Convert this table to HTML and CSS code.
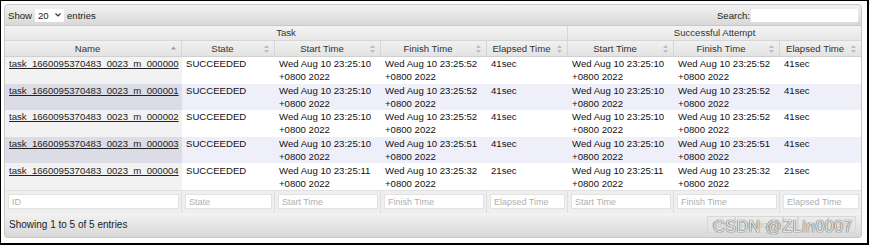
FILE: index.html
```html
<!DOCTYPE html>
<html>
<head>
<meta charset="utf-8">
<link rel="stylesheet" href="styles.css">
</head>
<body>
<div class="frame">
  <div class="wrapper">
    <div class="toolbar top">
      <div class="length">Show <span class="select">20<svg class="chev" width="6" height="4" viewBox="0 0 6 4"><path d="M0.5 0.5 L3 3 L5.5 0.5" fill="none" stroke="#333" stroke-width="1.2"/></svg></span> entries</div>
      <div class="search">Search:<span class="search-input"></span></div>
    </div>
    <table class="grid">
      <colgroup>
        <col class="c-name"><col class="c-state"><col class="c-time"><col class="c-time"><col class="c-el"><col class="c-time"><col class="c-time"><col class="c-el">
      </colgroup>
      <thead>
        <tr class="group">
          <th colspan="5" class="sep">Task</th>
          <th colspan="3">Successful Attempt</th>
        </tr>
        <tr class="cols">
          <th>Name<svg class="sort" width="5" height="8" viewBox="0 0 5 8"><path d="M2.5 1.5 L5 4.5 L0 4.5Z" fill="#9a9a9a"/></svg></th>
          <th>State<svg class="sort" width="5" height="8" viewBox="0 0 5 8"><path d="M2.5 0 L5 3 L0 3Z M0 5 L5 5 L2.5 8Z" fill="#bdbdbd"/></svg></th>
          <th>Start Time<svg class="sort" width="5" height="8" viewBox="0 0 5 8"><path d="M2.5 0 L5 3 L0 3Z M0 5 L5 5 L2.5 8Z" fill="#bdbdbd"/></svg></th>
          <th>Finish Time<svg class="sort" width="5" height="8" viewBox="0 0 5 8"><path d="M2.5 0 L5 3 L0 3Z M0 5 L5 5 L2.5 8Z" fill="#bdbdbd"/></svg></th>
          <th class="sep">Elapsed Time<svg class="sort" width="5" height="8" viewBox="0 0 5 8"><path d="M2.5 0 L5 3 L0 3Z M0 5 L5 5 L2.5 8Z" fill="#bdbdbd"/></svg></th>
          <th>Start Time<svg class="sort" width="5" height="8" viewBox="0 0 5 8"><path d="M2.5 0 L5 3 L0 3Z M0 5 L5 5 L2.5 8Z" fill="#bdbdbd"/></svg></th>
          <th>Finish Time<svg class="sort" width="5" height="8" viewBox="0 0 5 8"><path d="M2.5 0 L5 3 L0 3Z M0 5 L5 5 L2.5 8Z" fill="#bdbdbd"/></svg></th>
          <th class="last">Elapsed Time<svg class="sort" width="5" height="8" viewBox="0 0 5 8"><path d="M2.5 0 L5 3 L0 3Z M0 5 L5 5 L2.5 8Z" fill="#bdbdbd"/></svg></th>
        </tr>
      </thead>
      <tbody>
        <tr class="odd">
          <td class="sorted"><a href="#">task_1660095370483_0023_m_000000</a></td>
          <td>SUCCEEDED</td>
          <td>Wed Aug 10 23:25:10<br>+0800 2022</td>
          <td>Wed Aug 10 23:25:52<br>+0800 2022</td>
          <td>41sec</td>
          <td>Wed Aug 10 23:25:10<br>+0800 2022</td>
          <td>Wed Aug 10 23:25:52<br>+0800 2022</td>
          <td>41sec</td>
        </tr>
        <tr class="even">
          <td class="sorted"><a href="#">task_1660095370483_0023_m_000001</a></td>
          <td>SUCCEEDED</td>
          <td>Wed Aug 10 23:25:10<br>+0800 2022</td>
          <td>Wed Aug 10 23:25:52<br>+0800 2022</td>
          <td>41sec</td>
          <td>Wed Aug 10 23:25:10<br>+0800 2022</td>
          <td>Wed Aug 10 23:25:52<br>+0800 2022</td>
          <td>41sec</td>
        </tr>
        <tr class="odd">
          <td class="sorted"><a href="#">task_1660095370483_0023_m_000002</a></td>
          <td>SUCCEEDED</td>
          <td>Wed Aug 10 23:25:10<br>+0800 2022</td>
          <td>Wed Aug 10 23:25:52<br>+0800 2022</td>
          <td>41sec</td>
          <td>Wed Aug 10 23:25:10<br>+0800 2022</td>
          <td>Wed Aug 10 23:25:52<br>+0800 2022</td>
          <td>41sec</td>
        </tr>
        <tr class="even">
          <td class="sorted"><a href="#">task_1660095370483_0023_m_000003</a></td>
          <td>SUCCEEDED</td>
          <td>Wed Aug 10 23:25:10<br>+0800 2022</td>
          <td>Wed Aug 10 23:25:51<br>+0800 2022</td>
          <td>41sec</td>
          <td>Wed Aug 10 23:25:10<br>+0800 2022</td>
          <td>Wed Aug 10 23:25:51<br>+0800 2022</td>
          <td>41sec</td>
        </tr>
        <tr class="odd">
          <td class="sorted"><a href="#">task_1660095370483_0023_m_000004</a></td>
          <td>SUCCEEDED</td>
          <td>Wed Aug 10 23:25:11<br>+0800 2022</td>
          <td>Wed Aug 10 23:25:32<br>+0800 2022</td>
          <td>21sec</td>
          <td>Wed Aug 10 23:25:11<br>+0800 2022</td>
          <td>Wed Aug 10 23:25:32<br>+0800 2022</td>
          <td>21sec</td>
        </tr>
      </tbody>
      <tfoot>
        <tr class="filters">
          <th><input type="text" placeholder="ID"></th>
          <th><input type="text" placeholder="State"></th>
          <th><input type="text" placeholder="Start Time"></th>
          <th><input type="text" placeholder="Finish Time"></th>
          <th><input type="text" placeholder="Elapsed Time"></th>
          <th><input type="text" placeholder="Start Time"></th>
          <th><input type="text" placeholder="Finish Time"></th>
          <th class="last"><input type="text" placeholder="Elapsed Time"></th>
        </tr>
      </tfoot>
    </table>
    <div class="toolbar bottom">
      <div class="info">Showing 1 to 5 of 5 entries</div>
      <div class="paging">
        <span class="btn">First</span><span class="btn">Previous</span><span class="btn">1</span><span class="btn">Next</span><span class="btn">Last</span>
      </div>
    </div>
  </div>
  <div class="watermark">CSDN @ZLin0007</div>
</div>
</body>
</html>
```
FILE: styles.css
```css
* { box-sizing: border-box; }
body {
  margin: 0;
  font-family: "Liberation Sans", Arial, sans-serif;
  font-size: 9.6px;
  color: #222;
  background: #fff;
}
.frame {
  width: 869px;
  height: 245px;
  border-style: solid;
  border-color: #000;
  border-width: 1px 2px 2px 1px;
  padding: 3px 5px 0 3px;
  position: relative;
  overflow: hidden;
}
.wrapper { width: 858px; }

.toolbar {
  display: flex;
  align-items: center;
  justify-content: space-between;
  border: 1px solid #c8c8c8;
  background: linear-gradient(#f3f3f3, #d8d8d8);
  padding: 0 3px;
  color: #222;
}
.top { height: 22px; border-radius: 4px 4px 0 0; }
.bottom { height: 25px; border-radius: 0 0 4px 4px; border-top: none; }

.length { display: flex; align-items: center; gap: 3px; font-size: 9.6px; }
.select {
  display: inline-flex;
  align-items: center;
  justify-content: space-between;
  width: 29px;
  height: 13px;
  background: #fff;
  padding: 0 3px 0 3px;
  font-size: 9.6px;
}
.chev { display: block; }
.search { display: flex; align-items: center; gap: 1px; }
.search-input {
  display: block;
  width: 107px;
  height: 13px;
  background: #fff;
}

.grid {
  width: 858px;
  table-layout: fixed;
  border-collapse: separate;
  border-spacing: 0;
  border-left: 1px solid #c8c8c8;
  border-right: 1px solid #c8c8c8;
}
.c-name { width: 177px; }
.c-state { width: 93px; }
.c-time { width: 106px; }
.c-el { width: 81px; }

thead th {
  font-weight: normal;
  color: #333;
  padding: 0;
  white-space: nowrap;
}
.group th {
  height: 15px;
  background: linear-gradient(#f3f3f3, #e7e7e7);
  border-bottom: 1px solid #d6d6d6;
  text-align: center;
  line-height: 14px;
}
.group th.sep { border-right: 1px solid #d6d6d6; }
.cols th {
  position: relative;
  height: 16px;
  background: linear-gradient(#f1f1f1, #e3e3e3);
  border-right: 1px solid #d6d6d6;
  border-bottom: 1px solid #d0d0d0;
  text-align: center;
  padding: 0 13px 0 2px;
  line-height: 15px;
}
.cols th.last { border-right: none; }
.sort {
  position: absolute;
  right: 5px;
  top: 4px;
}

tbody td {
  padding: 0.3px 4px;
  line-height: 13px;
  vertical-align: top;
  white-space: nowrap;
  color: #111;
}
tbody tr.odd td { background: #fff; }
tbody tr.odd td.sorted { background: #f2f2f2; }
tbody tr.even td { background: #efeffa; }
tbody tr.even td.sorted { background: #dcdce7; }
tbody a { color: #222; text-decoration: underline; }

.filters th {
  height: 23px;
  background: #efefef;
  border-right: 1px solid #dedede;
  border-top: 1px solid #e2e2e2;
  padding: 0 2px 0 3px;
  font-weight: normal;
}
.filters th.last { border-right: none; }
.filters input {
  display: block;
  width: 100%;
  height: 15px;
  border: 1px solid #e2e2e2;
  background: #fff;
  font-family: "Liberation Sans", Arial, sans-serif;
  font-size: 9px;
  padding: 0 3px;
  margin: 0;
  outline: none;
}
.filters input::placeholder { color: #b0b0b0; }

.info { font-size: 10px; padding-left: 1px; }
.paging { display: flex; align-items: center; margin-right: 2px; }
.btn {
  padding: 2px 4px;
  border: 1px solid #d8d8d8;
  color: #c4c4c4;
  font-size: 9.6px;
  line-height: 11px;
  background: linear-gradient(#ececec, #e0e0e0);
}

.watermark {
  position: absolute;
  right: 14px;
  top: 217px;
  font-family: "Liberation Sans", Arial, sans-serif;
  font-size: 16px;
  letter-spacing: 0.5px;
  color: #e4e4e4;
  text-shadow: 0 0 1px #555, 0 0 1px #555;
}
```
